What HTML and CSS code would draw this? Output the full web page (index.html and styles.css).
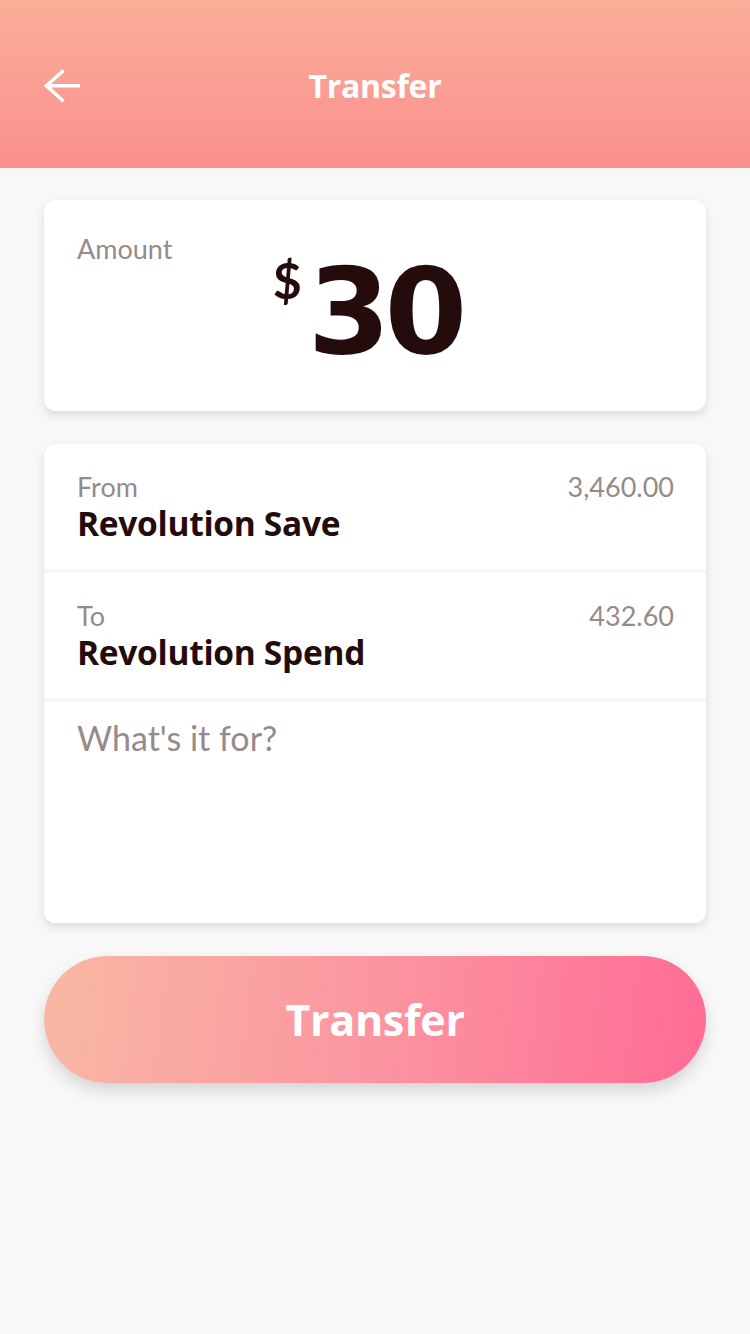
FILE: index.html
```html
<!DOCTYPE html>
<html lang="en">
<head>
<meta charset="utf-8">
<title>Transfer</title>
<link rel="stylesheet" href="styles.css">
</head>
<body>
<header class="topbar">
  <button class="back" aria-label="Back">
    <svg class="back-icon" viewBox="0 0 36 36" width="36" height="36">
      <path d="M19.5 2.5 L2.5 17.8 L19.5 33.2 M2.5 17.8 H36" fill="none" stroke="#fff" stroke-width="3.5" stroke-linejoin="miter" stroke-linecap="butt"/>
    </svg>
  </button>
  <h1 class="title">Transfer</h1>
  <span class="spacer"></span>
</header>

<main class="content">
  <section class="card amount-card">
    <span class="label">Amount</span>
    <div class="amount">
      <span class="currency">$</span>
      <span class="value">30</span>
    </div>
  </section>

  <section class="card details-card">
    <div class="account-row">
      <div class="account-info">
        <span class="label">From</span>
        <span class="account-name">Revolution Save</span>
      </div>
      <span class="balance">3,460.00</span>
    </div>
    <div class="account-row">
      <div class="account-info">
        <span class="label">To</span>
        <span class="account-name">Revolution Spend</span>
      </div>
      <span class="balance">432.60</span>
    </div>
    <textarea class="note" placeholder="What's it for?"></textarea>
  </section>

  <button class="transfer-btn">Transfer</button>
</main>
</body>
</html>
```

FILE: styles.css
```css
* {
  box-sizing: border-box;
}

html, body {
  margin: 0;
  padding: 0;
}

body {
  width: 750px;
  min-height: 1334px;
  background: #f8f8f8;
  font-family: "Lato", "Open Sans", "Liberation Sans", sans-serif;
  color: #250c0c;
}

.topbar {
  height: 168px;
  padding: 3px 44px 0;
  display: grid;
  grid-template-columns: 1fr auto 1fr;
  align-items: center;
  background: linear-gradient(180deg, #fbae98 0%, #fa8f8f 100%);
}

.back {
  justify-self: start;
  width: 36px;
  height: 36px;
  padding: 0;
  margin: 0;
  border: 0;
  background: none;
  display: flex;
}

.back-icon {
  display: block;
}

.title {
  margin: 0;
  font-family: "Open Sans", "Lato", sans-serif;
  font-size: 32px;
  line-height: 40px;
  font-weight: 700;
  letter-spacing: -0.3px;
  color: #fff;
}

.content {
  padding: 32px 44px 0;
  display: flex;
  flex-direction: column;
}

.card {
  background: #fff;
  border-radius: 12px;
  box-shadow: 0 4px 10px rgba(0, 0, 0, 0.12);
  overflow: hidden;
}

.label {
  font-size: 27px;
  line-height: 32px;
  color: #978a8a;
}

.amount-card {
  height: 211px;
  padding: 33px 33px 0;
  display: grid;
  grid-template-columns: 1fr auto 1fr;
  align-items: start;
}

.amount {
  display: flex;
  align-items: flex-start;
  margin-right: 16px;
  color: #250c0c;
  font-weight: 700;
}

.currency {
  font-size: 50px;
  line-height: 50px;
  margin-top: 22px;
  margin-right: 6px;
}

.value {
  font-family: "DejaVu Sans", "Open Sans", sans-serif;
  font-size: 119px;
  line-height: 119px;
  margin-top: 20px;
  letter-spacing: -6px;
}

.details-card {
  margin-top: 33px;
  display: flex;
  flex-direction: column;
}

.account-row {
  display: flex;
  justify-content: space-between;
  align-items: flex-start;
  padding: 27px 32px 26px 33px;
  border-bottom: 4px solid #f6f6f6;
}

.account-info {
  display: flex;
  flex-direction: column;
}

.account-name {
  font-family: "Open Sans", "Lato", sans-serif;
  font-size: 33.5px;
  line-height: 40px;
  font-weight: 700;
  letter-spacing: -0.3px;
  color: #250c0c;
}

.balance {
  font-size: 27px;
  line-height: 32px;
  color: #978a8a;
}

.note {
  display: block;
  width: 100%;
  height: 221px;
  margin: 0;
  padding: 14px 33px;
  border: 0;
  outline: none;
  resize: none;
  font-family: inherit;
  font-size: 34px;
  line-height: 44px;
  color: #250c0c;
  background: #fff;
}

.note::placeholder {
  color: #978a8a;
  opacity: 1;
}

.transfer-btn {
  margin-top: 33px;
  height: 127px;
  border: 0;
  border-radius: 64px;
  background: linear-gradient(97deg, #f8b8a3 0%, #fb95a0 50%, #ff6b95 100%);
  box-shadow: 0 8px 16px rgba(0, 0, 0, 0.14);
  font-family: "Open Sans", "Lato", sans-serif;
  font-size: 43px;
  font-weight: 700;
  line-height: 127px;
  letter-spacing: -0.3px;
  padding: 0;
  color: #fff;
}
```
